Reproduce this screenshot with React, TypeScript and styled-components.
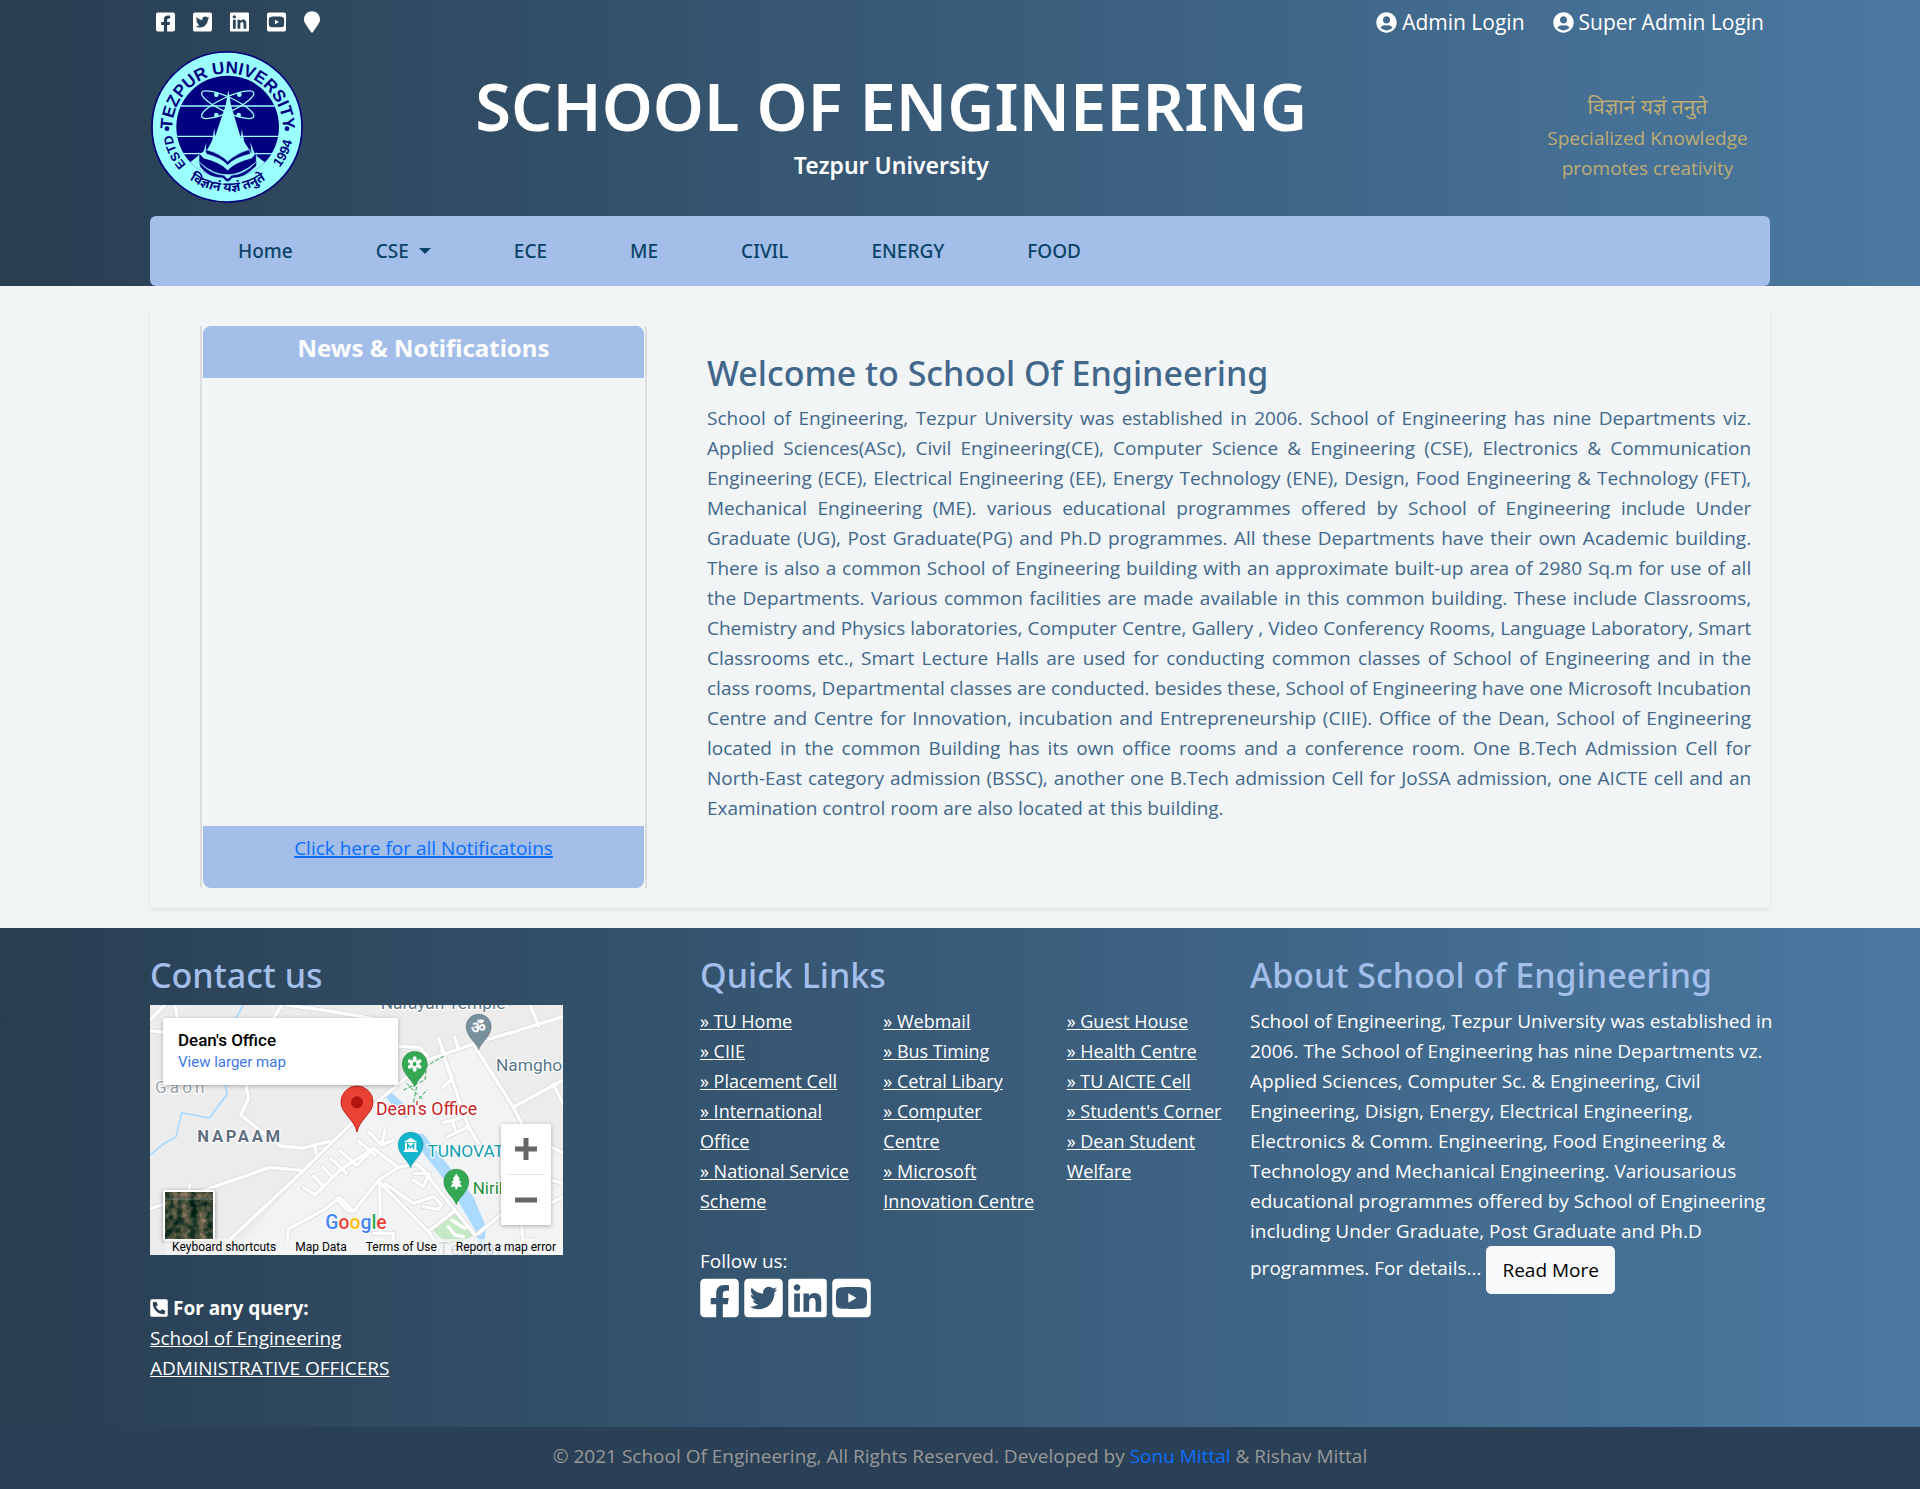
import React from 'react';
import styled, { createGlobalStyle, css } from 'styled-components';
import {
  FaFacebookSquare,
  FaTwitterSquare,
  FaLinkedin,
  FaYoutubeSquare,
  FaMapMarker,
  FaPhoneSquareAlt,
  FaUserCircle,
} from 'react-icons/fa';

const bodyFont = "'Open Sans', 'Noto Sans', sans-serif";
const headFont = "'Noto Sans', 'Open Sans', sans-serif";
const mapFont = "Roboto, 'Liberation Sans', sans-serif";
const sky = '#a2bee9';
const gradient = 'linear-gradient(to right, #283e51, #4b79a1)';

const GlobalStyle = createGlobalStyle`
  *, *::before, *::after { box-sizing: border-box; }
  body {
    margin: 0;
    background: #f1f5f6;
    font-family: ${bodyFont};
    font-size: 19px;
    line-height: 30px;
  }
  h1, h2, h3, p, ul { margin: 0; padding: 0; }
  ul { list-style: none; }
`;

const Container = styled.div`
  width: 100%;
  max-width: 1650px;
  margin: 0 auto;
  padding: 0 15px;
`;

/* ---------- Header ---------- */

const Header = styled.header`
  background: ${gradient};
`;

const TopBar = styled.div`
  display: flex;
  justify-content: space-between;
  align-items: center;
  height: 44px;
  padding: 0 6px;
`;

const TopLinks = styled.div<{ $gap: number }>`
  display: flex;
  align-items: center;
  gap: ${(p) => p.$gap}px;
`;

const IconLink = styled.a<{ $width: number; $height: number }>`
  display: inline-flex;
  color: #fff;

  svg {
    flex: none;
    width: ${(p) => p.$width}px;
    height: ${(p) => p.$height}px;
  }
`;

const LoginLink = styled.a`
  display: inline-flex;
  align-items: center;
  gap: 5px;
  color: #fff;
  font-size: 21px;
  text-decoration: none;
`;

const Brand = styled.div`
  display: grid;
  grid-template-columns: 2fr 7fr 1fr 2fr;
  margin: 0 -15px;
  height: 172px;
`;

const LogoCell = styled.div`
  padding: 7px 16px;
`;

const TitleCell = styled.div`
  padding-top: 18px;
  text-align: center;
  color: #fff;
  font-family: ${headFont};
`;

const Title = styled.h1`
  font-size: 65px;
  font-weight: 600;
  line-height: 88px;
  white-space: nowrap;
`;

const Subtitle = styled.h2`
  font-size: 23px;
  font-weight: 600;
  line-height: 30px;
`;

const Motto = styled.p`
  grid-column: 4;
  padding: 46px 15px 0;
  color: #beac73;
  text-align: center;
`;

const Sanskrit = styled.span`
  display: block;
  font-size: 21px;
  line-height: 33px;
`;

const Nav = styled.nav`
  display: flex;
  align-items: center;
  gap: 83px;
  height: 70px;
  padding: 0 88px;
  border-radius: 6px;
  background: ${sky};
`;

const NavLink = styled.a`
  display: inline-flex;
  align-items: center;
  gap: 10px;
  color: #0b4268;
  font-family: ${headFont};
  font-weight: 500;
  text-decoration: none;
`;

const Caret = styled.span`
  border: 6px solid transparent;
  border-top-color: currentColor;
  border-bottom: 0;
`;

/* ---------- Main panel ---------- */

const Main = styled.main`
  padding: 20px 0;
`;

const Panel = styled.section`
  display: grid;
  grid-template-columns: 447px 1fr;
  gap: 60px;
  padding: 20px 20px 20px 50px;
  border-radius: 5px;
  box-shadow: 0 2px 5px rgba(0, 0, 0, 0.08);
`;

const News = styled.div`
  display: flex;
  flex-direction: column;
  padding: 0 1px;
  border: solid #dddddd;
  border-width: 0 2px;
`;

const NewsTitle = styled.h3`
  height: 52px;
  padding-top: 7px;
  border-radius: 8px 8px 0 0;
  background: ${sky};
  color: #fff;
  font-family: ${headFont};
  font-size: 24px;
  font-weight: 700;
  text-align: center;
`;

const NewsBody = styled.div`
  flex: 1;
  min-height: 448px;
`;

const NewsFooter = styled.div`
  height: 62px;
  padding-top: 7px;
  border-radius: 0 0 8px 8px;
  background: ${sky};
  text-align: center;
`;

const NewsLink = styled.a`
  color: #0d6efd;
  text-decoration-thickness: 2px;
`;

const heading = css`
  font-family: ${headFont};
  font-size: 34px;
  font-weight: 500;
  line-height: 44px;
  margin-bottom: 8px;
`;

const Welcome = styled.div`
  padding-top: 25px;
  color: #41678b;
`;

const WelcomeTitle = styled.h2`
  ${heading}
`;

const WelcomeText = styled.p`
  text-align: justify;
`;

const Line = styled.span`
  @media (min-width: 1650px) {
    display: block;
    white-space: nowrap;
    text-align-last: justify;

    &:last-child {
      text-align-last: left;
    }
  }
`;

/* ---------- Footer ---------- */

const Footer = styled.footer`
  background: ${gradient};
  color: #fff;
`;

const FooterGrid = styled.div`
  display: grid;
  grid-template-columns: repeat(3, 1fr);
  gap: 30px;
  padding: 25px 0 44px;
`;

const FooterTitle = styled.h2`
  ${heading}
  color: ${sky};
`;

const WhiteLink = styled.a`
  color: #fff;
`;

const Query = styled.div`
  margin-top: 38px;
`;

const QueryTitle = styled.p`
  display: flex;
  align-items: center;
  gap: 5px;
  font-family: ${headFont};
  font-weight: 700;

  svg {
    width: 18px;
    height: 20px;
  }
`;

const LinkColumns = styled.div`
  display: grid;
  grid-template-columns: repeat(3, 1fr);
  gap: 28px;
  margin: 0 -2px 30px 0;
  padding-top: 1px;
  font-size: 18px;
`;

const SocialRow = styled.div`
  display: flex;
  gap: 5px;
`;

const AboutText = styled.p`
  margin-right: -4px;
  padding-top: 1px;
`;

const ReadMore = styled.button`
  height: 48px;
  padding: 0 15px;
  border: 1px solid #f8f9fa;
  border-radius: 5px;
  background: #f8f9fa;
  color: #000;
  font: inherit;
  vertical-align: middle;
`;

const Copyright = styled.div`
  height: 62px;
  padding-top: 14px;
  background: #294056;
  color: #999;
  text-align: center;
`;

const AuthorLink = styled.a`
  color: #0d6efd;
  text-decoration: none;
`;

/* ---------- Map ---------- */

const MapFrame = styled.div`
  position: relative;
  width: 413px;
  max-width: 100%;
  height: 250px;
  overflow: hidden;
  background: #ececec;
  font-family: ${mapFont};
`;

const MapDrawing = styled.svg`
  display: block;
  width: 413px;
  height: 250px;
`;

const PlaceCard = styled.div`
  position: absolute;
  left: 13px;
  top: 13px;
  width: 235px;
  height: 67px;
  padding: 11px 15px;
  border-radius: 2px;
  background: #fff;
  box-shadow: 0 1px 4px rgba(0, 0, 0, 0.3);
`;

const PlaceName = styled.div`
  color: #000;
  font-size: 17px;
  font-weight: 500;
  line-height: 23px;
`;

const PlaceLink = styled.a`
  display: block;
  color: #3b78e7;
  font-size: 15px;
  line-height: 21px;
  text-decoration: none;
`;

const ZoomBox = styled.div`
  position: absolute;
  right: 12px;
  top: 119px;
  display: flex;
  flex-direction: column;
  width: 50px;
  height: 101px;
  padding: 0 6px;
  border-radius: 2px;
  background: #fff;
  box-shadow: 0 1px 4px rgba(0, 0, 0, 0.3);
`;

const ZoomButton = styled.button`
  flex: 1;
  display: flex;
  align-items: center;
  justify-content: center;
  padding: 0;
  border: 0;
  background: none;

  & + & {
    border-top: 1px solid #e6e6e6;
  }
`;

const Satellite = styled.button`
  position: absolute;
  left: 13px;
  top: 185px;
  width: 52px;
  height: 51px;
  padding: 0;
  border: 2px solid #fff;
  border-radius: 2px;
  overflow: hidden;
  background: #2f4a38;
  box-shadow: 0 1px 4px rgba(0, 0, 0, 0.4);
`;

const MapTerms = styled.div`
  position: absolute;
  right: 0;
  bottom: 0;
  display: flex;
  gap: 19px;
  padding: 0 7px;
  background: rgba(245, 245, 245, 0.7);
  color: #000;
  font-size: 12px;
  line-height: 16px;
  white-space: nowrap;
`;

const roads = [
  'M30 240 L75 195',
  'M30 272 L75 277',
  'M105 195 L112 235',
  'M425 195 L398 240',
  'M440 195 L560 212 L700 236',
  'M770 318 L838 322 L862 348',
  'M318 435 L325 478 L302 525 L420 618 L490 624 L568 604',
  'M525 612 L528 640',
  'M30 806 L390 682 L490 692',
  'M145 755 L150 735',
  'M270 898 L490 692 L640 545 L862 360 L1000 312 L1269 230',
  'M1170 195 L1196 258',
  'M1000 312 L1120 502 L1160 580 L1269 640',
  'M1120 502 L1269 420',
  'M1240 432 L1269 492',
  'M905 330 L985 560 L1015 610',
  'M895 295 L915 345',
  'M944 290 L955 325',
  'M925 385 L938 415 L910 440',
  'M910 548 L975 530 M922 590 L985 560 M938 545 L948 575',
  'M490 742 L525 765 L600 690 M520 708 L550 738 M548 680 L575 710 M572 655 L620 700 M600 632 L650 676 L700 625 M655 602 L705 645 M685 575 L725 615 L735 570 M725 615 L760 600',
  'M700 625 L775 682 L830 672 L850 690 L920 780 L1005 885',
  'M600 690 L700 625',
  'M775 682 L718 718 L640 815 L600 772 L550 810 L445 868 L440 920',
  'M640 815 L620 810 L590 775',
  'M718 718 L722 880 M722 730 L870 880 L910 945',
  'M735 730 L820 790 L880 770 L905 795 L895 808 L850 800',
  'M822 700 L868 700 L850 740 L820 720',
  'M870 870 L945 812 M700 880 L760 880 L758 915',
  'M1015 880 L1085 822 M1145 855 L1148 900 L1180 900',
  'M1232 720 L1269 730 M1232 790 L1269 770',
];

function Pin({ x, y, color, children }: { x: number; y: number; color: string; children?: React.ReactNode }) {
  return (
    <g transform={`translate(${x} ${y})`}>
      <path
        d="M0 70 C-6 48 -38 30 -38 0 A38 38 0 0 1 38 0 C38 30 6 48 0 70 Z"
        fill={color}
        stroke="rgba(0,0,0,.2)"
        strokeWidth="2"
      />
      {children}
    </g>
  );
}

function CampusMap() {
  return (
    <MapFrame>
      <MapDrawing viewBox="30 195 1239 750" role="img" aria-label="Map of the campus">
        <rect x="30" y="195" width="1239" height="750" fill="#ececec" />
        <path d="M270 945 L490 700 L640 550 L862 370 L1000 320 L1140 560 L1269 640 V945 Z" fill="#f1f3f4" />
        <path d="M310 195 L288 235 L255 430 L262 462 L208 534 L125 518 L108 590 L70 612 L30 645" fill="none" stroke="#aadaff" strokeWidth="5" />
        <path d="M735 468 L752 455 L805 505 L800 535 L780 525 Z" fill="#aadaff" />
        <path d="M830 580 L850 582 L935 690 L1000 770 L1038 860 L1030 945 L1005 870 L930 740 L850 640 Z" fill="#aadaff" />
        <path d="M875 868 L940 808 L1005 885 L930 920 Z" fill="#c5e8c5" />
        <g fill="none" strokeLinejoin="round" strokeLinecap="round">
          {roads.map((d) => (
            <path key={d} d={d} stroke="#dcdcdf" strokeWidth="15" />
          ))}
          {roads.map((d) => (
            <path key={`${d}-top`} d={d} stroke="#fff" strokeWidth="10" />
          ))}
          <path d="M925 860 L945 885 L970 890 M935 840 L975 865" stroke="#fff" strokeWidth="10" />
        </g>
        <path d="M912 348 L860 378 L855 420 L786 452 M800 430 L850 480 M825 490 L862 448 M830 440 L820 490" fill="none" stroke="#34a853" strokeWidth="3" strokeDasharray="12 6" />

        <g fontFamily={mapFont} stroke="#fff" strokeWidth="7" strokeLinejoin="round" paintOrder="stroke">
          <text x="722" y="206" fontSize="52" fill="#5b7688">Narayan Temple</text>
          <text x="1068" y="392" fontSize="52" fill="#5b7688">Namgho</text>
          <text x="45" y="458" fontSize="52" letterSpacing="9" fill="#9aa5ad">Gaon</text>
          <text x="172" y="606" fontSize="50" fontWeight="700" letterSpacing="8" fill="#607080">NAPAAM</text>
          <text x="708" y="524" fontSize="53" fill="#c5221f">Dean's Office</text>
          <text x="862" y="650" fontSize="52" fill="#129eaf">TUNOVAT</text>
          <text x="998" y="762" fontSize="51" fill="#1e8e3e">Niril</text>
          <text x="895" y="945" fontSize="54" letterSpacing="6" fill="#7b98a5">Tezpur</text>
        </g>

        <Pin x={1016} y={260} color="#78909c">
          <text y="20" fontSize="48" fontWeight="700" textAnchor="middle" fill="#fff">ॐ</text>
        </Pin>
        <Pin x={824} y={372} color="#34a853">
          <g fill="#fff">
            {[0, 60, 120, 180, 240, 300].map((a) => (
              <ellipse key={a} cy="-14" rx="6" ry="9" transform={`rotate(${a})`} />
            ))}
          </g>
        </Pin>
        <Pin x={812} y={614} color="#12b5cb">
          <path d="M-20 -8 L0 -21 L20 -8 Z M-17 -6 V17 H-21 V22 H21 V17 H17 V-6 Z" fill="#fff" />
          <path d="M-9 14 V-1 L0 9 L9 -1 V14" fill="none" stroke="#12b5cb" strokeWidth="4" />
        </Pin>
        <Pin x={949} y={725} color="#34a853">
          <path d="M0 -24 L11 -8 H7 L15 4 H9 L18 15 H3 V23 H-3 V15 H-18 L-9 4 H-15 L-7 -8 H-11 Z" fill="#fff" />
        </Pin>
        <path d="M651 576 C645 540 603 520 603 486 A48 48 0 0 1 699 486 C699 520 657 540 651 576 Z" fill="#ea4335" stroke="#c5221f" strokeWidth="3" />
        <circle cx="651" cy="487" r="18" fill="#b31412" />

        <text x="556" y="868" fontSize="58" fontFamily={mapFont} fontWeight="500" stroke="#fff" strokeWidth="6" paintOrder="stroke">
          <tspan fill="#4285f4">G</tspan>
          <tspan fill="#ea4335">o</tspan>
          <tspan fill="#fbbc04">o</tspan>
          <tspan fill="#4285f4">g</tspan>
          <tspan fill="#34a853">l</tspan>
          <tspan fill="#ea4335">e</tspan>
        </text>
      </MapDrawing>
      <PlaceCard>
        <PlaceName>Dean's Office</PlaceName>
        <PlaceLink href="#map">View larger map</PlaceLink>
      </PlaceCard>
      <ZoomBox>
        <ZoomButton aria-label="Zoom in">
          <svg width="22" height="22" viewBox="0 0 22 22">
            <path d="M8.500 0h5v8.500h8.500v5h-8.500v8.500h-5v-8.500h-8.500v-5h8.500z" fill="#666" />
          </svg>
        </ZoomButton>
        <ZoomButton aria-label="Zoom out">
          <svg width="22" height="22" viewBox="0 0 22 22">
            <path d="M0 8.500h22v5h-22z" fill="#666" />
          </svg>
        </ZoomButton>
      </ZoomBox>
      <Satellite aria-label="Show satellite imagery">
        <svg width="48" height="47" viewBox="0 0 48 47">
          <filter id="terrain" x="0" y="0" width="100%" height="100%" colorInterpolationFilters="sRGB">
            <feTurbulence type="fractalNoise" baseFrequency="0.12" numOctaves="4" seed="6" />
            <feColorMatrix values="1 0 0 0 -0.27  0.6 0 0 0 -0.02  0.5 0 0 0 -0.04  0 0 0 0 1" />
          </filter>
          <rect width="48" height="47" filter="url(#terrain)" />
          <path d="M0 7h48" stroke="#8fa096" strokeWidth="1" opacity="0.6" />
        </svg>
      </Satellite>
      <MapTerms>
        <span>Keyboard shortcuts</span>
        <span>Map Data</span>
        <span>Terms of Use</span>
        <span>Report a map error</span>
      </MapTerms>
    </MapFrame>
  );
}

/* ---------- University seal ---------- */

function Seal() {
  const navy = '#000080';
  const aqua = '#99ffff';
  return (
    <svg width="152" height="152" viewBox="2 17 456 456" role="img" aria-label="Tezpur University seal">
      <defs>
        <clipPath id="disc">
          <circle cx="232" cy="245" r="154" />
        </clipPath>
        <path id="arcTop" d="M66 250 A166 166 0 0 1 398 250" />
        <path id="arcLeft" d="M232 413 A168 168 0 0 1 64 245" />
        <path id="arcBottom" d="M38 245 A194 194 0 0 0 426 245" />
        <path id="arcRight" d="M232 443 A198 198 0 0 0 430 245" />
      </defs>
      <circle cx="230" cy="245" r="225" fill={aqua} stroke={navy} strokeWidth="5" />
      <g clipPath="url(#disc)">
        <rect x="70" y="85" width="330" height="320" fill={navy} />
        <path d="M70 182 H400 M70 273 H400 M70 325 H400" stroke={aqua} strokeWidth="4" />
        <g fill="none" stroke={aqua} strokeWidth="4">
          <ellipse cx="232" cy="178" rx="86" ry="22" transform="rotate(25 232 178)" />
          <ellipse cx="232" cy="178" rx="86" ry="22" transform="rotate(-25 232 178)" />
        </g>
        <g fill={aqua}>
          <circle cx="198" cy="148" r="7" />
          <circle cx="267" cy="148" r="7" />
          <circle cx="198" cy="209" r="7" />
          <circle cx="265" cy="209" r="7" />
          <path d="M234 134 L242 180 L272 280 L274 250 L282 290 L304 325 L300 290 L314 328 L345 352 L400 300 V410 H70 V310 L118 352 L160 318 L168 292 L166 322 L186 285 L192 248 L194 275 L226 180 Z" />
        </g>
      </g>
      <g fill={navy} stroke={aqua} strokeWidth="2">
        <path d="M144 347 Q180 388 222 390 Q232 408 242 390 Q284 388 320 347 L318 362 Q280 402 246 398 Q232 420 218 398 Q176 400 150 366 Z" />
        <path d="M146 322 L160 338 Q210 350 232 374 Q254 350 304 338 L318 322 L318 350 Q270 390 232 388 Q190 390 146 350 Z" />
        <path d="M164 312 Q210 324 232 348 Q258 324 298 312 L300 326 Q250 338 232 360 Q214 338 168 326 Z" />
      </g>
      <g fill={navy}>
        <circle cx="50" cy="250" r="7" />
        <circle cx="410" cy="250" r="7" />
      </g>
      <g fill={navy} fontFamily="'Liberation Sans', sans-serif" fontWeight="700" textAnchor="middle">
        <text fontSize="51">
          <textPath href="#arcTop" startOffset="50%">TEZPUR UNIVERSITY</textPath>
        </text>
        <text fontSize="38">
          <textPath href="#arcLeft" startOffset="72%">ESTD</textPath>
        </text>
        <text fontSize="39" fontFamily="'Noto Sans', 'Noto Sans Devanagari', sans-serif">
          <textPath href="#arcBottom" startOffset="50%">विज्ञानं यज्ञं तनुते</textPath>
        </text>
        <text fontSize="40">
          <textPath href="#arcRight" startOffset="72%">1994</textPath>
        </text>
      </g>
    </svg>
  );
}

/* ---------- Page ---------- */

const social = [
  { label: 'Facebook', Icon: FaFacebookSquare },
  { label: 'Twitter', Icon: FaTwitterSquare },
  { label: 'LinkedIn', Icon: FaLinkedin },
  { label: 'YouTube', Icon: FaYoutubeSquare },
];

const departments = ['Home', 'CSE', 'ECE', 'ME', 'CIVIL', 'ENERGY', 'FOOD'];

const welcomeLines = [
  'School of Engineering, Tezpur University was established in 2006. School of Engineering has nine Departments viz.',
  'Applied Sciences(ASc), Civil Engineering(CE), Computer Science & Engineering (CSE), Electronics & Communication',
  'Engineering (ECE), Electrical Engineering (EE), Energy Technology (ENE), Design, Food Engineering & Technology (FET),',
  'Mechanical Engineering (ME). various educational programmes offered by School of Engineering include Under',
  'Graduate (UG), Post Graduate(PG) and Ph.D programmes. All these Departments have their own Academic building.',
  'There is also a common School of Engineering building with an approximate built-up area of 2980 Sq.m for use of all',
  'the Departments. Various common facilities are made available in this common building. These include Classrooms,',
  'Chemistry and Physics laboratories, Computer Centre, Gallery , Video Conferency Rooms, Language Laboratory, Smart',
  'Classrooms etc., Smart Lecture Halls are used for conducting common classes of School of Engineering and in the',
  'class rooms, Departmental classes are conducted. besides these, School of Engineering have one Microsoft Incubation',
  'Centre and Centre for Innovation, incubation and Entrepreneurship (CIIE). Office of the Dean, School of Engineering',
  'located in the common Building has its own office rooms and a conference room. One B.Tech Admission Cell for',
  'North-East category admission (BSSC), another one B.Tech admission Cell for JoSSA admission, one AICTE cell and an',
  'Examination control room are also located at this building.',
];

const quickLinks = [
  ['TU Home', 'CIIE', 'Placement Cell', 'International Office', 'National Service Scheme'],
  ['Webmail', 'Bus Timing', 'Cetral Libary', 'Computer Centre', 'Microsoft Innovation Centre'],
  ['Guest House', 'Health Centre', 'TU AICTE Cell', "Student's Corner", 'Dean Student Welfare'],
];

export default function App() {
  return (
    <>
      <GlobalStyle />
      <Header>
        <Container>
          <TopBar>
            <TopLinks $gap={18}>
              {social.map(({ label, Icon }) => (
                <IconLink key={label} $width={19} $height={22} href="#social" aria-label={label}>
                  <Icon />
                </IconLink>
              ))}
              <IconLink $width={16} $height={22} href="#location" aria-label="Location">
                <FaMapMarker />
              </IconLink>
            </TopLinks>
            <TopLinks $gap={28}>
              <LoginLink href="#admin">
                <FaUserCircle size={21} />
                Admin Login
              </LoginLink>
              <LoginLink href="#super-admin">
                <FaUserCircle size={21} />
                Super Admin Login
              </LoginLink>
            </TopLinks>
          </TopBar>
          <Brand>
            <LogoCell>
              <Seal />
            </LogoCell>
            <TitleCell>
              <Title>SCHOOL OF ENGINEERING</Title>
              <Subtitle>Tezpur University</Subtitle>
            </TitleCell>
            <Motto>
              <Sanskrit lang="sa">विज्ञानं यज्ञं तनुते</Sanskrit>
              Specialized Knowledge promotes creativity
            </Motto>
          </Brand>
          <Nav>
            {departments.map((name) => (
              <NavLink key={name} href={`#${name.toLowerCase()}`}>
                {name}
                {name === 'CSE' && <Caret />}
              </NavLink>
            ))}
          </Nav>
        </Container>
      </Header>

      <Main>
        <Container>
          <Panel>
            <News>
              <NewsTitle>News &amp; Notifications</NewsTitle>
              <NewsBody />
              <NewsFooter>
                <NewsLink href="#notifications">Click here for all Notificatoins</NewsLink>
              </NewsFooter>
            </News>
            <Welcome>
              <WelcomeTitle>Welcome to School Of Engineering</WelcomeTitle>
              <WelcomeText>
                {welcomeLines.map((line) => (
                  <Line key={line}>{line} </Line>
                ))}
              </WelcomeText>
            </Welcome>
          </Panel>
        </Container>
      </Main>

      <Footer>
        <Container>
          <FooterGrid>
            <section>
              <FooterTitle>Contact us</FooterTitle>
              <CampusMap />
              <Query>
                <QueryTitle>
                  <FaPhoneSquareAlt />
                  For any query:
                </QueryTitle>
                <ul>
                  <li>
                    <WhiteLink href="#school">School of Engineering</WhiteLink>
                  </li>
                  <li>
                    <WhiteLink href="#officers">ADMINISTRATIVE OFFICERS</WhiteLink>
                  </li>
                </ul>
              </Query>
            </section>
            <section>
              <FooterTitle>Quick Links</FooterTitle>
              <LinkColumns>
                {quickLinks.map((column) => (
                  <ul key={column[0]}>
                    {column.map((name) => (
                      <li key={name}>
                        <WhiteLink href="#link">» {name}</WhiteLink>
                      </li>
                    ))}
                  </ul>
                ))}
              </LinkColumns>
              <p>Follow us:</p>
              <SocialRow>
                {social.map(({ label, Icon }) => (
                  <IconLink key={label} $width={39} $height={44} href="#social" aria-label={label}>
                    <Icon />
                  </IconLink>
                ))}
              </SocialRow>
            </section>
            <section>
              <FooterTitle>About School of Engineering</FooterTitle>
              <AboutText>
                School of Engineering, Tezpur University was established in 2006. The School of Engineering has nine
                Departments vz. Applied Sciences, Computer Sc. &amp; Engineering, Civil Engineering, Disign, Energy,
                Electrical Engineering, Electronics &amp; Comm. Engineering, Food Engineering &amp; Technology and
                Mechanical Engineering. Variousarious educational programmes offered by School of Engineering
                including Under Graduate, Post Graduate and Ph.D programmes. For details...{' '}
                <ReadMore>Read More</ReadMore>
              </AboutText>
            </section>
          </FooterGrid>
        </Container>
        <Copyright>
          © 2021 School Of Engineering, All Rights Reserved. Developed by{' '}
          <AuthorLink href="#author">Sonu Mittal</AuthorLink> &amp; Rishav Mittal
        </Copyright>
      </Footer>
    </>
  );
}
